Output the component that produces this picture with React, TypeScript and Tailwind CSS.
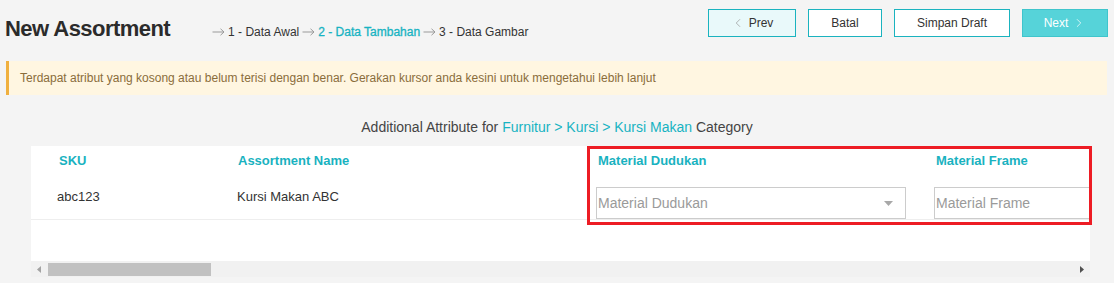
import { ChevronLeft, ChevronRight } from "lucide-react"

const steps = [
    { label: "1 - Data Awal", active: false },
    { label: "2 - Data Tambahan", active: true },
    { label: "3 - Data Gambar", active: false },
]

function StepArrow() {
    return (
        <svg width="13" height="8" viewBox="0 0 13 8" className="mr-[3px] self-center mt-[1px]">
            <path d="M0.5 4H12M8.5 0.8L12 4L8.5 7.2" fill="none" stroke="#9a9a9a" strokeWidth="1" />
        </svg>
    )
}

export default function App() {
    return (
        <div className="min-h-screen bg-[#f4f4f4] font-['Liberation_Sans',Arial,sans-serif] text-[#333]">
            {/* Header */}
            <header className="h-[61px] flex justify-between">
                <div className="flex items-baseline pl-[5px] pt-[16px]">
                    <h1 className="text-[22px] leading-[26px] font-bold tracking-tight text-[#2b2b2b]">New Assortment</h1>
                    <div className="ml-[42px] flex items-baseline gap-[3px] text-[12px] text-[#333]">
                        {steps.map((s) => (
                            <span key={s.label} className="flex items-center">
                                <StepArrow />
                                <span className={s.active ? "text-[#17b3c2] [-webkit-text-stroke:0.3px_#17b3c2]" : ""}>{s.label}</span>
                            </span>
                        ))}
                    </div>
                </div>
                <div className="flex gap-3 pt-[9px] pr-[6px] text-[12px]">
                    <button className="w-[88px] h-[28px] flex items-center justify-center gap-1 border border-[#1ab3bf] bg-[#e9f9fa] text-[#333]">
                        <ChevronLeft className="w-[14px] h-[14px] text-[#999]" strokeWidth={1.25} />
                        Prev
                    </button>
                    <button className="w-[74px] h-[28px] flex items-center justify-center border border-[#1ab3bf] bg-white text-[#333]">
                        Batal
                    </button>
                    <button className="w-[116px] h-[28px] flex items-center justify-center border border-[#1ab3bf] bg-white text-[#333]">
                        Simpan Draft
                    </button>
                    <button className="w-[86px] h-[28px] flex items-center justify-center gap-1 border border-[#3fc5cc] bg-[#56d3d9] text-white">
                        Next
                        <ChevronRight className="w-[14px] h-[14px] text-white" strokeWidth={1.25} />
                    </button>
                </div>
            </header>

            {/* Warning */}
            <div className="ml-[6px] mr-[7px] h-[34px] flex items-center border-l-[3px] border-[#f0b03f] bg-[#fff6e1] pl-[11px] text-[12px] text-[#8a6d3b]">
                Terdapat atribut yang kosong atau belum terisi dengan benar. Gerakan kursor anda kesini untuk mengetahui lebih lanjut
            </div>

            {/* Category heading */}
            <p className="mt-[22px] mb-[9px] text-center text-[14px] leading-[20px] text-[#444]">
                Additional Attribute for <span className="text-[#17b3c2]">Furnitur &gt; Kursi &gt; Kursi Makan</span> Category
            </p>

            {/* Table card */}
            <div className="relative ml-[31px] mr-[24px]">
                <div className="bg-white overflow-hidden">
                    <div className="grid grid-cols-[179px_378px_332px_400px] w-max">
                        {/* header row */}
                        <div className="h-[30px] flex items-center pl-[28px] text-[13px] font-bold text-[#19b2c0]">SKU</div>
                        <div className="h-[30px] flex items-center pl-[28px] text-[13px] font-bold text-[#19b2c0]">Assortment Name</div>
                        <div className="h-[30px] flex items-center pl-[10px] text-[13px] font-bold text-[#19b2c0]">Material Dudukan</div>
                        <div className="h-[30px] flex items-center pl-[16px] text-[13px] font-bold text-[#19b2c0]">Material Frame</div>

                        {/* data row */}
                        <div className="h-[44px] border-b border-[#eeeeee] pl-[26px] pt-[13px] text-[13px] leading-[16px] text-[#333]">abc123</div>
                        <div className="h-[44px] border-b border-[#eeeeee] pl-[27px] pt-[13px] text-[13px] leading-[16px] text-[#333]">Kursi Makan ABC</div>
                        <div className="h-[44px] border-b border-[#eeeeee] pl-[8px] pt-[11px]">
                            <div className="w-[310px] h-[32px] border border-[#cccccc] flex items-center justify-between pl-[1px] pr-[12px] text-[14px] text-[#9a9a9a]">
                                Material Dudukan
                                <svg width="9" height="5" viewBox="0 0 9 5">
                                    <path d="M0 0h9L4.5 5z" fill="#a8a8a8" />
                                </svg>
                            </div>
                        </div>
                        <div className="h-[44px] border-b border-[#eeeeee] pl-[14px] pt-[11px]">
                            <div className="w-[300px] h-[32px] border border-[#cccccc] flex items-center pl-[1px] text-[14px] text-[#9a9a9a]">
                                Material Frame
                            </div>
                        </div>
                    </div>
                    <div className="h-[41px]" />

                    {/* scrollbar */}
                    <div className="h-[16px] flex bg-[#f1f1f1]">
                        <div className="w-[16px] flex items-center justify-center">
                            <svg width="4" height="7" viewBox="0 0 4 7">
                                <path d="M4 0v7L0 3.5z" fill="#a3a3a3" />
                            </svg>
                        </div>
                        <div className="flex-1 pt-[2px] pl-[1px]">
                            <div className="w-[163px] h-[13px] bg-[#c1c1c1]" />
                        </div>
                        <div className="w-[16px] flex items-center justify-center">
                            <svg width="4" height="7" viewBox="0 0 4 7">
                                <path d="M0 0v7l4-3.5z" fill="#505050" />
                            </svg>
                        </div>
                    </div>
                </div>

                {/* highlight box */}
                <div className="absolute left-[556px] top-0 w-[505px] h-[79px] border-[3px] border-[#ed1c24] pointer-events-none" />
            </div>
        </div>
    )
}
